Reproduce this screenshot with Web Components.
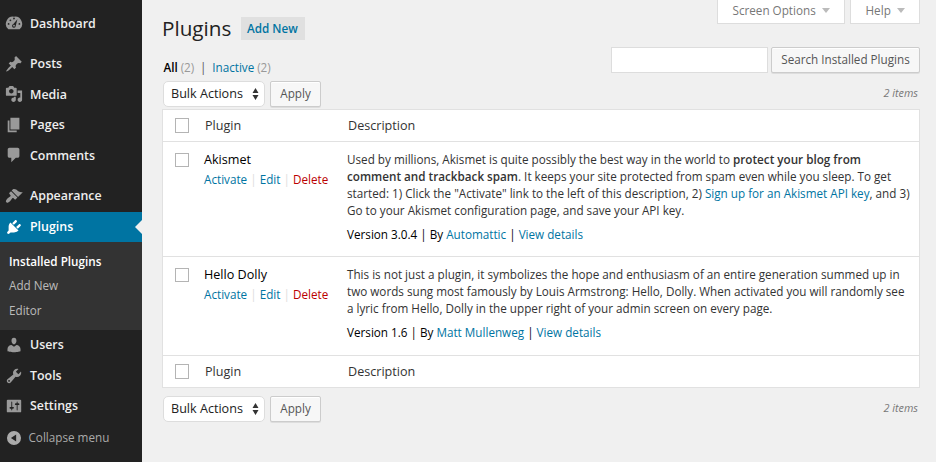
<!DOCTYPE html>
<html lang="en">
<head>
<meta charset="utf-8">
<title>Plugins</title>
<style>
html, body { margin: 0; height: 100%; }
body { background: #f0f0f0; font: 11.7px/17px "Open Sans", sans-serif; color: #333; overflow: hidden; }
wp-layout { --link: #0074a2; --line: #e1e1e1; }
plugin-row b { font-weight: 600; }
plugin-row a { color: #0074a2; }
</style>
</head>
<body>
<wp-layout>
  <wp-sidebar slot="nav"></wp-sidebar>
  <screen-tab slot="tabs" style="width:128px">Screen Options</screen-tab>
  <screen-tab slot="tabs" style="width:70px">Help</screen-tab>
  <page-title slot="content" label="Plugins" action="Add New"></page-title>
  <filter-bar slot="content"></filter-bar>
  <bulk-bar slot="content"></bulk-bar>
  <plugin-table slot="content">
    <plugin-row name="Akismet" style="height:114px">
      Used by millions, Akismet is quite possibly the best way in the world to <b>protect your blog from comment and trackback spam</b>. It keeps your site protected from spam even while you sleep. To get started: 1) Click the "Activate" link to the left of this description, 2) <a>Sign up for an Akismet API key</a>, and 3) Go to your Akismet configuration page, and save your API key.
      <span slot="meta">Version 3.0.4 | By <a>Automattic</a> | <a>View details</a></span>
    </plugin-row>
    <plugin-row name="Hello Dolly" style="height:98px">
      This is not just a plugin, it symbolizes the hope and enthusiasm of an entire generation summed up in two words sung most famously by Louis Armstrong: Hello, Dolly. When activated you will randomly see a lyric from Hello, Dolly in the upper right of your admin screen on every page.
      <span slot="meta">Version 1.6 | By <a>Matt Mullenweg</a> | <a>View details</a></span>
    </plugin-row>
  </plugin-table>
  <bulk-bar slot="content" style="padding-top:7px"></bulk-bar>
</wp-layout>
<script>
const define = (name, render) => customElements.define(name, class extends HTMLElement {
  connectedCallback() {
    if (this.shadowRoot) return;
    const t = document.createElement('template');
    t.innerHTML = render(this);
    this.attachShadow({ mode: 'open' }).append(t.content.cloneNode(true));
  }
});

const ICONS = {
  dashboard: 'M3.76 17h12.48A7.998 7.998 0 0 0 10 3a7.998 7.998 0 0 0-6.24 14zM10 4c.55 0 1 .45 1 1s-.45 1-1 1-1-.45-1-1 .45-1 1-1zM6 6c.55 0 1 .45 1 1s-.45 1-1 1-1-.45-1-1 .45-1 1-1zM13.8 5.8L9.1 11.5a2 2 0 1 0 2.8 1.9zM4 10c.55 0 1 .45 1 1s-.45 1-1 1-1-.45-1-1 .45-1 1-1zm12 0c.55 0 1 .45 1 1s-.45 1-1 1-1-.45-1-1 .45-1 1-1zm-5 3c0-.55-.45-1-1-1s-1 .45-1 1 .45 1 1 1 1-.45 1-1z',
  posts: 'M10.44 3.02l1.82-1.82 6.36 6.35-1.83 1.82c-1.05-.68-2.48-.57-3.41.36l-.75.75c-.92.93-1.04 2.35-.35 3.41l-1.83 1.82-2.41-2.41-2.8 2.79c-.42.42-3.38 2.71-3.8 2.29s1.86-3.39 2.28-3.81l2.79-2.79L4.1 9.36l1.83-1.82c1.05.69 2.48.57 3.4-.36l.75-.75c.93-.92 1.05-2.35.36-3.41z',
  media: 'M13 11V4c0-.55-.45-1-1-1h-1.67L9 1H5L3.67 3H2c-.55 0-1 .45-1 1v7c0 .55.45 1 1 1h10c.55 0 1-.45 1-1zM7 4.5c1.38 0 2.5 1.12 2.5 2.5S8.38 9.5 7 9.5 4.5 8.38 4.5 7 5.62 4.5 7 4.5zM14 6h5v10.5c0 1.38-1.12 2.5-2.5 2.5S14 17.88 14 16.5s1.12-2.5 2.5-2.5c.17 0 .34.02.5.05V9h-3V6zm-4 8.05V13h2v3.5c0 1.38-1.12 2.5-2.5 2.5S7 17.88 7 16.5 8.12 14 9.5 14c.17 0 .34.02.5.05z',
  pages: 'M6 15V2h10v13H6zm-1 1h8v2H3V5h2v11z',
  comments: 'M5 2h9c1.1 0 2 .9 2 2v7c0 1.1-.9 2-2 2h-2l-5 5v-5H5c-1.1 0-2-.9-2-2V4c0-1.1.9-2 2-2z',
  appearance: 'M14.48 11.06L7.41 3.99l1.5-1.5c.5-.56 2.3-.47 3.51.32 1.21.8 1.43 1.28 2.91 2.1 1.18.64 2.45 1.26 4.45.85zm-.71.71L6.7 4.7 4.93 6.47c-.39.39-.39 1.02 0 1.41l1.06 1.06c.39.39.39 1.03 0 1.42-.6.6-1.43 1.11-2.21 1.69-.35.26-.7.53-1.01.84C1.43 14.23.4 16.08 1.4 17.07c.99 1 2.84-.03 4.18-1.36.31-.31.58-.66.85-1.02.57-.78 1.08-1.61 1.69-2.21.39-.39 1.02-.39 1.41 0l1.06 1.06c.39.39 1.02.39 1.41 0z',
  plugins: 'M13.11 4.36L9.87 7.6 8 5.73l3.24-3.24c.35-.34 1.05-.2 1.56.32.52.51.66 1.21.31 1.55zm-8 1.77l.91-1.12 9.01 9.01-1.19.84c-.71.71-2.63 1.16-3.82 1.16H6.14L4.9 17.26c-.59.59-1.54.59-2.12 0-.59-.58-.59-1.53 0-2.12l1.24-1.24v-3.88c0-1.13.4-3.19 1.09-3.89zm7.26 3.97l3.24-3.24c.34-.35 1.04-.21 1.55.31.52.51.66 1.21.31 1.55l-3.24 3.25z',
  users: 'M10 9.25c-2.27 0-2.73-3.44-2.73-3.44C7 4.02 7.82 2 9.97 2c2.16 0 2.98 2.02 2.71 3.81 0 0-.41 3.44-2.68 3.44zm0 2.57L12.72 10c2.39 0 4.52 2.33 4.52 4.53v2.49s-3.65 1.13-7.24 1.13c-3.65 0-7.24-1.13-7.24-1.13v-2.49c0-2.25 1.94-4.48 4.47-4.48z',
  tools: 'M16.68 9.77c-1.34 1.34-3.3 1.67-4.95.99l-5.41 6.52c-.99.99-2.59.99-3.58 0s-.99-2.59 0-3.57l6.52-5.42c-.68-1.65-.35-3.61.99-4.95 1.28-1.28 3.12-1.62 4.72-1.06l-2.89 2.89 2.82 2.82 2.86-2.87c.53 1.58.18 3.39-1.08 4.65zM3.81 16.21c.4.39 1.04.39 1.43 0 .4-.4.4-1.04 0-1.43-.39-.4-1.03-.4-1.43 0-.39.39-.39 1.03 0 1.43z',
  settings: 'M18 16V4c0-.55-.45-1-1-1H3c-.55 0-1 .45-1 1v12c0 .55.45 1 1 1h14c.55 0 1-.45 1-1zM8 11h1c.55 0 1 .45 1 1s-.45 1-1 1H8v1.5c0 .28-.22.5-.5.5s-.5-.22-.5-.5V13H6c-.55 0-1-.45-1-1s.45-1 1-1h1V5.5c0-.28.22-.5.5-.5s.5.22.5.5V11zm5-2h-1c-.55 0-1-.45-1-1s.45-1 1-1h1V5.5c0-.28.22-.5.5-.5s.5.22.5.5V7h1c.55 0 1 .45 1 1s-.45 1-1 1h-1v5.5c0 .28-.22.5-.5.5s-.5-.22-.5-.5V9z',
  collapse: 'M10 2.2a7.8 7.8 0 1 0 0 15.6 7.8 7.8 0 0 0 0-15.6zM12.4 6v8L6.6 10z'
};

define('dash-icon', e => `
<style>:host{display:block;width:18px;height:18px}svg{display:block;width:100%;height:100%}</style>
<svg viewBox="0 0 20 20" fill="currentColor" fill-rule="evenodd"><path d="${ICONS[e.getAttribute('name')]}"/></svg>`);

define('menu-item', e => `
<style>
:host{display:flex;align-items:center;box-sizing:border-box;padding-left:5px;color:#eee;font-size:12.4px;font-weight:600;position:relative}
dash-icon{color:#999;margin-right:7px}
:host([current]){background:#0074a2;color:#fff}
:host([current]) dash-icon{color:#fff}
:host([current])::after{content:"";position:absolute;right:0;top:50%;margin-top:-7px;border:7px solid transparent;border-right-color:#f0f0f0;border-left-width:0}
:host([quiet]){color:#aaa;font-weight:400;font-size:11.7px}
:host([quiet]) dash-icon{color:#aaa;margin-right:5.5px}
</style>
<dash-icon name="${e.getAttribute('icon')}"></dash-icon><span><slot></slot></span>`);

define('wp-sidebar', () => `
<style>
:host{display:flex;flex-direction:column;box-sizing:border-box;width:142px;height:462px;background:#222;padding-top:8px}
.submenu{background:#333;height:88px;box-sizing:border-box;padding:7px 9px 0;color:#bbb;line-height:24.4px}
.submenu div{height:24.4px}
.submenu .on{color:#fff;font-weight:600}
</style>
<menu-item icon="dashboard" style="height:30px;margin-bottom:10px">Dashboard</menu-item>
<menu-item icon="posts" style="height:31px">Posts</menu-item>
<menu-item icon="media" style="height:30px">Media</menu-item>
<menu-item icon="pages" style="height:31px">Pages</menu-item>
<menu-item icon="comments" style="height:30px;margin-bottom:10px">Comments</menu-item>
<menu-item icon="appearance" style="height:32px;padding-bottom:1px">Appearance</menu-item>
<menu-item icon="plugins" current style="height:30px;padding-bottom:1px">Plugins</menu-item>
<div class="submenu"><div class="on">Installed Plugins</div><div>Add New</div><div>Editor</div></div>
<menu-item icon="users" style="height:30px;padding-bottom:1px">Users</menu-item>
<menu-item icon="tools" style="height:31px">Tools</menu-item>
<menu-item icon="settings" style="height:30px;padding-bottom:1px">Settings</menu-item>
<menu-item icon="collapse" quiet style="height:33px">Collapse menu</menu-item>`);

define('screen-tab', () => `
<style>
:host{display:flex;align-items:center;box-sizing:border-box;height:24px;border:1px solid #ddd;border-top:0;background:#fff;color:#777;padding:0 0 2px 14.5px}
i{border:4px solid transparent;border-top:5px solid #bbb;border-bottom:0;margin:-1px 0 0 6px}
</style><slot></slot><i></i>`);

define('page-title', e => `
<style>
:host{display:flex;box-sizing:border-box;gap:10px;margin-top:-7px;height:30px;align-items:flex-start}
h1{margin:-3px 0 0;font-size:20.7px;font-weight:400;line-height:28px;color:#222;width:69px;white-space:nowrap}
a{background:#e0e0e0;color:#0074a2;font-weight:600;height:23px;line-height:23px;padding:0 6px;width:52px;white-space:nowrap}
</style>
<h1>${e.getAttribute('label')}</h1><a>${e.getAttribute('action')}</a>`);

define('wp-button', () => `
<style>:host{display:block;box-sizing:border-box;height:26px;line-height:23px;border:1px solid #ccc;border-radius:2px;background:#f7f7f7;box-shadow:0 1px 0 rgba(0,0,0,.08),inset 0 1px 0 #fff;color:#555;text-align:center;white-space:nowrap}</style><slot></slot>`);

define('filter-bar', () => `
<style>
:host{display:flex;justify-content:space-between;height:33px}
nav{padding:12px 0 0 1.5px;color:#999;white-space:pre;word-spacing:-.15px}
b{font-weight:600;color:#000}a{color:var(--link)}i{font-style:normal;color:#555}
form{display:flex;gap:3px;margin:0}
input{box-sizing:border-box;width:157px;height:26px;border:1px solid #ddd;background:#fff;padding:0;margin:0}
wp-button{width:149px}
</style>
<nav><b>All</b> (2)  <i>|</i>  <a>Inactive</a> (2)</nav>
<form><input aria-label="Search"><wp-button>Search Installed Plugins</wp-button></form>`);

define('bulk-bar', () => `
<style>
:host{display:flex;align-items:center;height:28px}
.select{box-sizing:border-box;width:102px;height:26px;border:1px solid #ddd;border-radius:5px;background:#fff;margin-left:1px;padding:0 5px 0 7px;display:flex;align-items:center;justify-content:space-between;font-size:12.6px;color:#222;line-height:20px;white-space:nowrap}
.select svg{width:7px;height:14px;display:block}
.select span{margin-top:-1px}
wp-button{width:51px;margin-left:5px}
em{margin:-3px 0 0 auto;color:#777;font-size:10.8px;padding-right:2px}
</style>
<div class="select"><span>Bulk Actions</span><svg viewBox="0 0 7 14" fill="#333"><path d="M3.5 1L6.5 6h-6zM3.5 13L.5 8h6z"/></svg></div>
<wp-button>Apply</wp-button><em>2 items</em>`);

define('check-box', () => `
<style>:host{display:block;box-sizing:border-box;width:14px;height:14px;border:1px solid #b4b4b4;background:#fff}</style>`);

define('table-labels', () => `
<style>
:host{display:grid;grid-template-columns:42px 143px 1fr;align-items:center;font-size:12.6px;color:#333}
check-box{margin-left:12px;height:15px}
</style>
<check-box></check-box><span>Plugin</span><span>Description</span>`);

define('plugin-row', e => `
<style>
:host{display:grid;grid-template-columns:41px 143px 1fr;border-top:1px solid var(--line);align-items:start}
check-box{margin:11px 0 0 12px}
.name{color:#000;font-size:12.6px;padding-top:9px}
.actions{padding-top:3px;color:#ddd;white-space:pre}
.actions a{color:var(--link)}.actions .del{color:#b00}
.desc{padding:9px 8px 0 0}
.meta{padding-top:7px;color:#000}
</style>
<check-box></check-box>
<div><div class="name">${e.getAttribute('name')}</div><div class="actions"><a>Activate</a> | <a>Edit</a> | <a class="del">Delete</a></div></div>
<div class="desc"><div><slot></slot></div><div class="meta"><slot name="meta"></slot></div></div>`);

define('plugin-table', () => `
<style>
:host{display:block;box-sizing:border-box;width:758px;height:279px;border:1px solid var(--line);background:#fff;margin-top:1px}
table-labels{height:31px}.foot{border-top:1px solid var(--line)}
</style>
<table-labels></table-labels><slot></slot><table-labels class="foot"></table-labels>`);

define('wp-layout', () => `
<style>
:host{display:flex;width:936px;height:462px}
main{flex:1;padding:0 16px 0 20px}
.tabs{display:flex;justify-content:flex-end;gap:5px;height:24px}
</style>
<slot name="nav"></slot>
<main><div class="tabs"><slot name="tabs"></slot></div><slot name="content"></slot></main>`);
</script>
</body>
</html>
